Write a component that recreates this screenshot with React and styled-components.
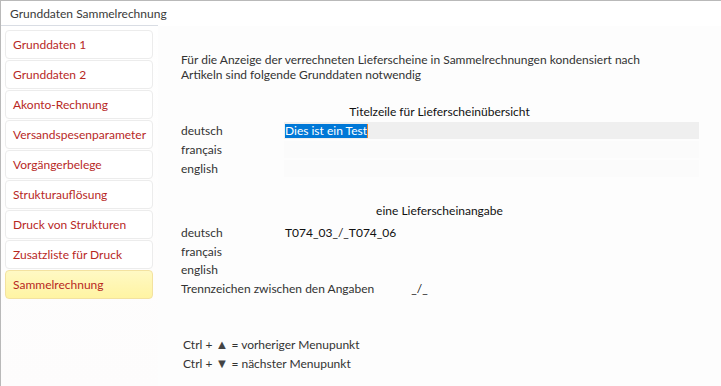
import React from 'react';
import styled, { createGlobalStyle } from 'styled-components';

const GlobalStyle = createGlobalStyle`
  html, body {
    margin: 0;
    padding: 0;
    background: #ffffff;
  }
  body {
    font-family: 'Segoe UI', Lato, 'Liberation Sans', sans-serif;
    font-size: 12px;
    color: #333;
  }
`;

const Frame = styled.div`
  width: 721px;
  height: 386px;
  box-sizing: border-box;
  border-top: 1px solid #b9b9b9;
  border-left: 1px solid #b9b9b9;
  display: flex;
  flex-direction: column;
  overflow: hidden;
`;

const TabBar = styled.div`
  height: 25px;
  display: flex;
  flex-shrink: 0;
`;

const Tab = styled.div`
  width: 157px;
  box-sizing: border-box;
  padding-left: 9px;
  display: flex;
  align-items: center;
  border-bottom: 1px solid #d9dde4;
  color: #3a3a3a;
  white-space: nowrap;
`;

const Body = styled.div`
  flex: 1;
  display: flex;
`;

const Sidebar = styled.div`
  width: 157px;
  flex-shrink: 0;
  box-sizing: border-box;
  padding: 4px 0 0 4px;
  display: flex;
  flex-direction: column;
  gap: 1px;
  background: linear-gradient(#ffffff, #fdfcfc);
`;

const MenuItem = styled.div`
  width: 148px;
  height: 29px;
  box-sizing: border-box;
  padding-left: 7px;
  display: flex;
  align-items: center;
  border: 1px solid ${(p) => (p.$active ? '#f3e2a0' : '#ececec')};
  border-radius: 4px;
  background: ${(p) => (p.$active ? 'linear-gradient(#fff9c4, #fff4a3)' : '#ffffff')};
  color: #b8281f;
  white-space: nowrap;
`;

const Content = styled.div`
  flex: 1;
  background: #fdfdfd;
  padding: 26px 22px 0 23px;
  display: flex;
  flex-direction: column;
`;

const Intro = styled.p`
  margin: 0;
  line-height: 15px;
  color: #333;
`;

const SectionTitle = styled.div`
  margin-top: ${(p) => p.$top}px;
  margin-left: -23px;
  margin-right: -22px;
  text-align: center;
  line-height: 15px;
  color: #111;
`;

const Rows = styled.div`
  margin-top: ${(p) => p.$top}px;
  display: flex;
  flex-direction: column;
`;

const Row = styled.div`
  height: ${(p) => p.$h || 19}px;
  display: grid;
  grid-template-columns: 103px 1fr;
  align-items: center;
`;

const Label = styled.div`
  color: #333;
  white-space: nowrap;
`;

const Field = styled.div`
  height: 17px;
  display: flex;
  align-items: center;
  padding-left: 1px;
  background: ${(p) => (p.$filled ? '#efefef' : p.$faint ? '#fbfbfb' : 'transparent')};
  color: #111;
`;

const Selected = styled.span`
  background: #0078d7;
  color: #fff;
  line-height: 14px;
  border-right: 1px solid #e8822a;
`;

const SeparatorRow = styled.div`
  height: 19px;
  display: flex;
  align-items: center;
`;

const SeparatorValue = styled.div`
  margin-left: 37px;
  color: #111;
`;

const Hints = styled.div`
  margin-top: 39px;
  margin-left: 2px;
  display: flex;
  flex-direction: column;
  gap: 4px;
  line-height: 15px;
`;

const Arrow = styled.span`
  color: #444;
  font-size: 13px;
  line-height: 12px;
`;

const menu = [
  'Grunddaten 1',
  'Grunddaten 2',
  'Akonto-Rechnung',
  'Versandspesenparameter',
  'Vorgängerbelege',
  'Strukturauflösung',
  'Druck von Strukturen',
  'Zusatzliste für Druck',
  'Sammelrechnung',
];

export default function App() {
  return (
    <>
      <GlobalStyle />
      <Frame>
        <TabBar>
          <Tab>Grunddaten Sammelrechnung</Tab>
        </TabBar>
        <Body>
          <Sidebar>
            {menu.map((m) => (
              <MenuItem key={m} $active={m === 'Sammelrechnung'}>
                {m}
              </MenuItem>
            ))}
          </Sidebar>
          <Content>
            <Intro>
              Für die Anzeige der verrechneten Lieferscheine in Sammelrechnungen kondensiert nach
              <br />
              Artikeln sind folgende Grunddaten notwendig
            </Intro>

            <SectionTitle $top={22}>Titelzeile für Lieferscheinübersicht</SectionTitle>
            <Rows $top={2}>
              <Row>
                <Label>deutsch</Label>
                <Field $filled>
                  <Selected>Dies ist ein Test</Selected>
                </Field>
              </Row>
              <Row>
                <Label>français</Label>
                <Field $faint />
              </Row>
              <Row>
                <Label>english</Label>
                <Field $faint />
              </Row>
            </Rows>

            <SectionTitle $top={25}>eine Lieferscheinangabe</SectionTitle>
            <Rows $top={5}>
              <Row $h={18.7}>
                <Label>deutsch</Label>
                <Field>T074_03_/_T074_06</Field>
              </Row>
              <Row $h={18.7}>
                <Label>français</Label>
                <Field />
              </Row>
              <Row $h={18.7}>
                <Label>english</Label>
                <Field />
              </Row>
              <SeparatorRow>
                <Label>Trennzeichen zwischen den Angaben</Label>
                <SeparatorValue>_/_</SeparatorValue>
              </SeparatorRow>
            </Rows>

            <Hints>
              <div>
                Ctrl + <Arrow>▲</Arrow> = vorheriger Menupunkt
              </div>
              <div>
                Ctrl + <Arrow>▼</Arrow> = nächster Menupunkt
              </div>
            </Hints>
          </Content>
        </Body>
      </Frame>
    </>
  );
}
